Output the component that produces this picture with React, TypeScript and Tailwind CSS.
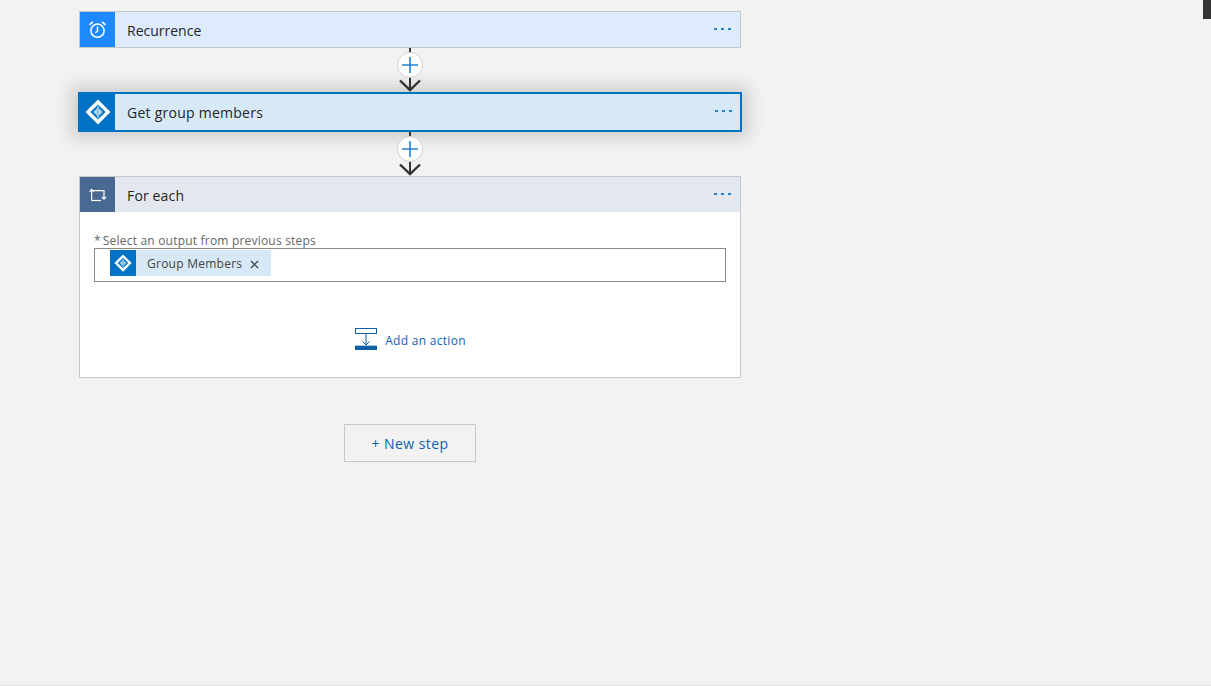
import { X } from "lucide-react";

const font = "font-['Open_Sans','Noto_Sans',sans-serif]";

function Dots({ className = "" }: { className?: string }) {
  return (
    <div className={`flex gap-[4px] ${className}`}>
      <span className="w-[3px] h-[2px] bg-[#2f7fc4]" />
      <span className="w-[3px] h-[2px] bg-[#2f7fc4]" />
      <span className="w-[3px] h-[2px] bg-[#2f7fc4]" />
    </div>
  );
}

function AadIcon({ size, inner = "#0072c6" }: { size: number; inner?: string }) {
  return (
    <svg width={size} height={size} viewBox="0 0 24 24" fill="none">
      <path d="M12 .5 23.5 12 12 23.5 .5 12Z" fill="#fff" />
      <path d="M12 5 19 12 12 19 5 12Z" fill={inner} />
      <path d="M11.2 8.4v7.2L7.6 12Z" fill="#a9d0ee" />
      <path d="M12.8 8.4v7.2L16.4 12Z" fill="#a9d0ee" />
      <path d="M12 6.5V17.5" stroke="#fff" strokeWidth="1" />
    </svg>
  );
}

function ClockIcon() {
  return (
    <svg width="19" height="19" viewBox="0 0 19 19" fill="none" stroke="#fff" strokeWidth="1.5">
      <circle cx="9.5" cy="10.7" r="6.6" />
      <path d="M9.5 6.6V11L7.4 13" />
      <path d="M1.6 4.8 4.8 1.8M17.4 4.8 14.2 1.8" strokeWidth="1.7" />
    </svg>
  );
}

function LoopIcon() {
  return (
    <svg width="18" height="14" viewBox="0 0 18 14" fill="none" stroke="#fff" strokeWidth="1.2">
      <path d="M2.6 12.5V2.6H15V10" />
      <path d="M2.6 12.5H12" />
      <path d="M.6 3.6 2.6 1.4 4.6 3.6" />
      <path d="M13 9 15 11.2 17 9" />
    </svg>
  );
}

function AddActionIcon() {
  return (
    <svg width="23" height="23" viewBox="0 0 23 23" fill="none">
      <rect x="0.5" y="0.5" width="21" height="5" stroke="#0f5fa8" fill="#fff" />
      <path d="M11 6V17M7.5 13.5 11 17 14.5 13.5" stroke="#0f5fa8" />
      <rect x="0" y="17" width="22" height="1" fill="#a9c4de" />
      <rect x="0" y="18" width="22" height="4" fill="#0f5fa8" />
    </svg>
  );
}

function Connector() {
  return (
    <div className="relative h-[44px] flex justify-center">
      <div className="w-[2px] h-[42px] bg-[#333333]" />
      <svg className="absolute bottom-0 left-[320px]" width="22" height="13" viewBox="0 0 22 13" fill="none">
        <path d="M1 1.5 11 11.2 21 1.5" stroke="#333333" strokeWidth="2.4" />
      </svg>
      <div className="absolute top-[4px] left-[318px] w-[26px] h-[26px] rounded-full bg-white border border-[#d0d0d0] flex items-center justify-center">
        <svg width="16" height="16" viewBox="0 0 16 16">
          <path d="M8 0V16M0 8H16" stroke="#1f82d6" strokeWidth="1.6" />
        </svg>
      </div>
    </div>
  );
}

export default function App() {
  return (
    <div className={`relative w-[1211px] h-[686px] overflow-hidden bg-[#f2f2f2] border-b border-[#e4e4e4] ${font}`}>
      {/* top right scrollbar bit */}
      <div className="absolute top-0 right-0 w-[8px] h-[19px] bg-[#333333]" />

      <div className="w-[662px] ml-[79px] pt-[11px]">
        {/* Recurrence */}
        <div className="h-[37px] flex items-stretch border border-[#c4c8cc] bg-[#deebfd]">
          <div className="w-[35px] bg-[#1e88ff] flex items-center justify-center">
            <ClockIcon />
          </div>
          <div className="flex-1 flex items-center pl-[12px] pt-[2px] text-[14px] text-[#252525]">Recurrence</div>
          <Dots className="self-center mr-[9px] -mt-[2px]" />
        </div>

        <Connector />

        {/* Get group members */}
        <div className="-mx-px h-[40px] flex items-stretch border-2 border-[#0072c6] bg-[#d7e9f6] shadow-[0_0_16px_6px_rgba(0,0,0,0.16)]">
          <div className="w-[35px] bg-[#0072c6] flex items-center justify-center">
            <AadIcon size={26} />
          </div>
          <div className="flex-1 flex items-center pl-[12px] text-[14px] tracking-[0.25px] text-[#252525]">Get group members</div>
          <Dots className="self-center mr-[8px] -mt-[2px]" />
        </div>

        <Connector />

        {/* For each */}
        <div className="h-[202px] border border-[#c8c8c8] bg-white flex flex-col">
          <div className="h-[35px] flex items-stretch bg-[#e3e8f0]">
            <div className="w-[35px] bg-[#486991] flex items-center justify-center">
              <LoopIcon />
            </div>
            <div className="flex-1 flex items-center pl-[12px] pt-[2px] text-[14px] tracking-[0.15px] text-[#252525]">For each</div>
            <Dots className="self-center mr-[9px] -mt-[2px]" />
          </div>

          <div className="px-[14px] pt-[21px]">
            <div className="h-[15px] flex items-center text-[12px] tracking-[0.2px] text-[#666666]">
              <span className="mr-[2px]">*</span>Select an output from previous steps
            </div>
            <div className="h-[34px] border border-[#8a8a8a] pl-[15px] pt-[1px]">
              <div className="inline-flex items-center h-[26px] bg-[#d7e9f6]">
                <div className="w-[26px] h-[26px] bg-[#0072c6] flex items-center justify-center">
                  <AadIcon size={18} />
                </div>
                <span className="ml-[11px] pt-[2px] text-[12px] tracking-[0.25px] text-[#444444]">Group Members</span>
                <X className="ml-[6px] mr-[10px] mt-[3px] text-[#333333]" size={13} strokeWidth={2} />
              </div>
            </div>
          </div>

          <div className="mt-[46px] flex items-center justify-center gap-[7px] ml-[1px]">
            <AddActionIcon />
            <span className="pt-[2px] text-[12px] tracking-[0.3px] text-[#0f62ad]">Add an action</span>
          </div>
        </div>

        {/* New step */}
        <div className="flex justify-center mt-[46px]">
          <div className="w-[132px] h-[38px] border border-[#c8c8c8] flex items-center justify-center text-[14px] tracking-[0.45px] text-[#0f62ad]">
            + New step
          </div>
        </div>
      </div>
    </div>
  );
}
